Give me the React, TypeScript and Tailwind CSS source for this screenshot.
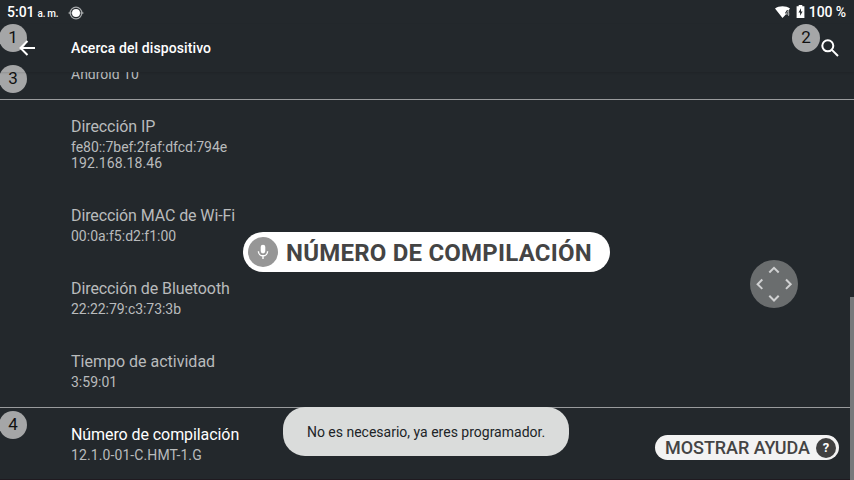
import type { ReactNode } from "react";

const rows = [
  {
    title: "Dirección IP",
    tracking: "tracking-[-0.08px]",
    lines: [
      { text: "fe80::7bef:2faf:dfcd:794e", tracking: "tracking-[-0.03px]" },
      { text: "192.168.18.46", tracking: "tracking-[0.12px]" },
    ],
  },
  {
    title: "Dirección MAC de Wi-Fi",
    tracking: "tracking-[-0.1px]",
    lines: [{ text: "00:0a:f5:d2:f1:00", tracking: "tracking-normal" }],
  },
  {
    title: "Dirección de Bluetooth",
    tracking: "tracking-[-0.09px]",
    lines: [{ text: "22:22:79:c3:73:3b", tracking: "tracking-[-0.05px]" }],
  },
  {
    title: "Tiempo de actividad",
    tracking: "tracking-normal",
    lines: [{ text: "3:59:01", tracking: "tracking-normal" }],
  },
];

function Badge({ className, children }: { className: string; children: ReactNode }) {
  return (
    <div className={`absolute flex size-7 items-center justify-center rounded-full bg-[#a5a6a7] pb-px text-[17px] leading-none text-[#111] ${className}`}>
      {children}
    </div>
  );
}

function StatusBar() {
  return (
    <div className="flex h-6 items-center pl-[7px] pr-2 font-medium text-white">
      <span className="text-[14px] leading-6">5:01</span>
      <span className="ml-[3px] mt-[3px] text-[10px] leading-5 tracking-[-0.3px]">a. m.</span>
      <svg className="ml-[10px] mt-px" width="16" height="14" viewBox="0 0 16 14">
        <circle cx="8" cy="7" r="5.8" fill="none" stroke="#a4a7a9" strokeWidth="1.3" />
        <path d="M0.6 7h3M12.4 7h3" stroke="#a4a7a9" strokeWidth="1.4" />
        <circle cx="8" cy="7" r="4" fill="#fff" />
      </svg>
      <svg className="ml-auto" width="15" height="13" viewBox="0 0 15 13">
        <path d="M0 2.4C4-.4 11-.4 15 2.4L13.5 4.4 12 4 10 7l1.2 1L7.5 12z" fill="#fff" />
        <path d="M13.6 4v6M11 8h3.4M13.4 4.4L11 8" stroke="#a6a8a9" strokeWidth="1" fill="none" />
      </svg>
      <svg className="-mt-[2px] ml-[6px]" width="9" height="13" viewBox="0 0 9 13">
        <path d="M2.7 0h3.6v1.3H8.4V13H.6V1.3h2.1z" fill="#fff" />
        <path d="M5 3.2L2.5 7.6h1.6v3.2l2.5-4.4H5z" fill="#23282c" />
      </svg>
      <span className="ml-[4px] text-[14px] leading-6 tracking-[-0.1px]">100 %</span>
    </div>
  );
}

export default function App() {
  return (
    <div className="relative flex h-[480px] w-[854px] flex-col overflow-hidden bg-[#23282c] font-['Roboto',sans-serif]">
      <StatusBar />
      <header className="z-10 flex h-12 shrink-0 items-center pl-[19px] pr-[15px] text-white shadow-[0_1px_2px_rgba(0,0,0,0.12)]">
        <svg className="z-10" width="17" height="16" viewBox="0 0 17 16" fill="none" stroke="#fff" strokeWidth="2">
          <path d="M16 8H2M8.5 1L1.5 8l7 7" />
        </svg>
        <h1 className="ml-[35px] text-[14px] font-medium tracking-[0.1px]">Acerca del dispositivo</h1>
        <svg className="ml-auto" width="18" height="18" viewBox="0 0 18 18" fill="none" stroke="#fff" strokeWidth="2">
          <circle cx="6.8" cy="6.8" r="5.5" />
          <path d="M10.9 10.9L17 17" />
        </svg>
      </header>

      <main className="flex flex-col text-[14px] leading-4 text-[#b9bbbc]">
        <div className="flex h-7 flex-col overflow-hidden border-b border-[#999b9d] pl-[71px]">
          <span className="-mt-[6px]">Android 10</span>
        </div>
        {rows.map((row, i) => (
          <section
            key={row.title}
            className={`pt-[17px] pl-[71px] ${i === rows.length - 1 ? "border-b border-[#999b9d] pb-[17px]" : "pb-[18px]"}`}
          >
            <h2 className={`h-[22px] text-[16px] leading-[19px] ${row.tracking}`}>{row.title}</h2>
            {row.lines.map((line) => (
              <p key={line.text} className={line.tracking}>
                {line.text}
              </p>
            ))}
          </section>
        ))}
        <section className="pb-[18px] pl-[71px] pt-[17px]">
          <h2 className="h-[22px] text-[16px] leading-[19px] tracking-[-0.08px] text-white">Número de compilación</h2>
          <p className="tracking-[0.1px]">12.1.0-01-C.HMT-1.G</p>
        </section>
      </main>

      <div className="absolute bottom-0 left-0 h-px w-full bg-[#1f1a20]" />
      <div className="absolute bottom-0 right-0 h-[183px] w-1 bg-[#77797b]" />

      <Badge className="-left-px top-6">1</Badge>
      <Badge className="left-[792px] top-6">2</Badge>
      <Badge className="-left-px top-[65px]">3</Badge>
      <Badge className="-left-px top-[411px]">4</Badge>

      <div className="absolute left-[243px] top-[232px] flex h-10 w-[367px] items-center rounded-full bg-white pl-[5px]">
        <span className="flex size-[30px] items-center justify-center rounded-full bg-[#969696]">
          <svg width="12" height="16" viewBox="0 0 12 16" fill="none">
            <rect x="3.7" y="0.8" width="4.6" height="8.6" rx="2.3" fill="#fff" />
            <path d="M1.4 7.2a4.6 4.6 0 009.2 0M6 11.8v3.2" stroke="#fff" strokeWidth="1.4" />
          </svg>
        </span>
        <span className="ml-2 mt-px whitespace-nowrap text-[24px] font-bold leading-10 tracking-[0.22px] text-[#444]">NÚMERO DE COMPILACIÓN</span>
      </div>

      <div className="absolute left-[750px] top-[260px] size-12 rounded-full bg-[#6a6d6e]">
        <svg width="48" height="48" viewBox="0 0 48 48" fill="none" stroke="#d0d1d2" strokeWidth="2">
          <path d="M19.3 12.5L24 7.8l4.7 4.7M19.3 35.8l4.7 4.7 4.7-4.7M12.3 19.5L7.6 24.2l4.7 4.7M36 19.5l4.7 4.7-4.7 4.7" />
        </svg>
      </div>

      <div className="absolute left-[283px] top-[407px] flex h-[49px] w-[286px] items-center justify-center whitespace-nowrap rounded-[22px] bg-[#dadcdb] pt-[2px] text-[14px] text-[#202427]">
        No es necesario, ya eres programador.
      </div>

      <div className="absolute left-[655px] top-[435px] flex h-[25px] w-[184px] items-center rounded-full bg-[#f3f3f3] pl-[10px] pr-[3px]">
        <span className="whitespace-nowrap text-[18px] font-medium leading-[25px] tracking-[-0.05px] text-[#444]">MOSTRAR AYUDA</span>
        <span className="ml-auto flex size-5 items-center justify-center rounded-full bg-[#414141] text-[13px] font-bold leading-none text-white">?</span>
      </div>
    </div>
  );
}
